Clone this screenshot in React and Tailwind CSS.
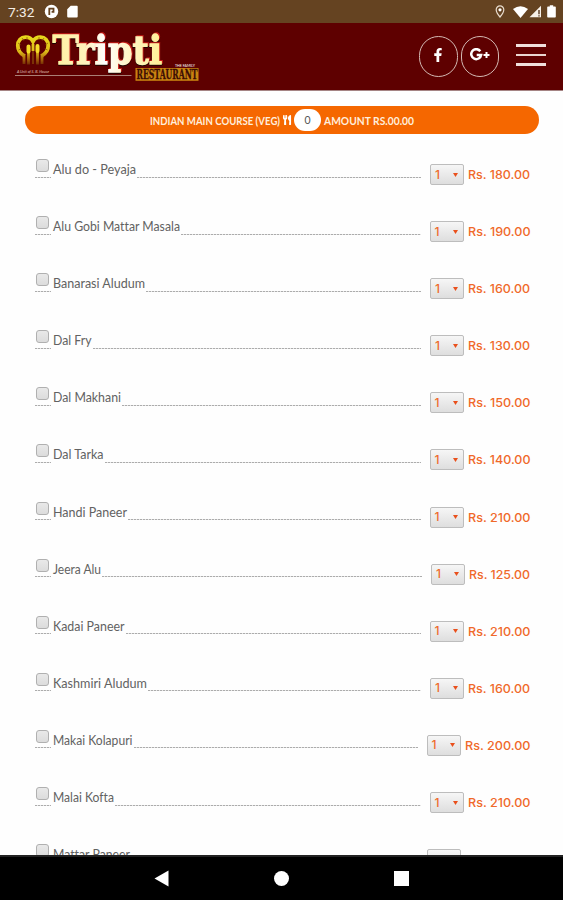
import React from "react";
import { FaFacebookF, FaUtensils } from "react-icons/fa";

const dishes = [
  { name: "Alu do - Peyaja", price: "180.00", nameWidth: 83, priceWidth: 62 },
  { name: "Alu Gobi Mattar Masala", price: "190.00", nameWidth: 127, priceWidth: 62.5 },
  { name: "Banarasi Aludum", price: "160.00", nameWidth: 92, priceWidth: 62 },
  { name: "Dal Fry", price: "130.00", nameWidth: 38.5, priceWidth: 62 },
  { name: "Dal Makhani", price: "150.00", nameWidth: 68, priceWidth: 62.5 },
  { name: "Dal Tarka", price: "140.00", nameWidth: 50.5, priceWidth: 62.5 },
  { name: "Handi Paneer", price: "210.00", nameWidth: 74, priceWidth: 62.5 },
  { name: "Jeera Alu", price: "125.00", nameWidth: 48, priceWidth: 61 },
  { name: "Kadai Paneer", price: "210.00", nameWidth: 71.5, priceWidth: 62.5 },
  { name: "Kashmiri Aludum", price: "160.00", nameWidth: 94, priceWidth: 62 },
  { name: "Makai Kolapuri", price: "200.00", nameWidth: 79.5, priceWidth: 65.5 },
  { name: "Malai Kofta", price: "210.00", nameWidth: 61, priceWidth: 62.5 },
  { name: "Mattar Paneer", price: "200.00", nameWidth: 77, priceWidth: 65.5 },
];

// A line of text stretched or squeezed to an exact width.
function FitText({ text, width, height, baseline, size, weight = 400, fill, font = "font-['Lato',sans-serif]" }) {
  return (
    <svg width={width} height={height} className="block shrink-0 overflow-visible">
      <text
        x="0"
        y={baseline}
        textLength={width}
        lengthAdjust="spacingAndGlyphs"
        fontSize={size}
        fontWeight={weight}
        fill={fill}
        className={`${font} [font-variant-ligatures:none]`}
      >
        {text}
      </text>
    </svg>
  );
}

function Dashes({ className }) {
  return (
    <div
      className={`h-px bg-[repeating-linear-gradient(90deg,#acacac_0_2px,#e6e6e6_2px_3px)] ${className}`}
    />
  );
}

function StatusBar() {
  return (
    <div className="flex h-[23px] shrink-0 items-center bg-[#654321] pl-2 pr-[7px] text-white">
      <FitText text="7:32" width={26.5} height={14} baseline={12} size={12.5} fill="#f4eee6" font="font-['Roboto',sans-serif]" />
      <svg className="ml-[9px]" width="15" height="15" viewBox="0 0 15 15">
        <circle cx="7.5" cy="7.5" r="6.7" fill="#fff" />
        <path d="M5.300 11V4.600h4.200v3.200H7.600" fill="none" stroke="#654321" strokeWidth="1.8" />
      </svg>
      <svg className="ml-2" width="11" height="13" viewBox="0 0 11 13">
        <path d="M3.7.8h6A1 1 0 0 1 10.7 2v9.5a1 1 0 0 1-1 1H1.2a1 1 0 0 1-1-1V4.3z" fill="#fff" />
      </svg>
      <div className="flex-1" />
      <svg width="10" height="13" viewBox="0 0 10 13">
        <path d="M5 .9a3.8 3.8 0 0 0-3.8 3.8C1.2 7.5 5 12 5 12s3.8-4.5 3.8-7.3A3.8 3.8 0 0 0 5 .9z" fill="none" stroke="#e8dccd" strokeWidth="1.2" />
        <circle cx="5" cy="4.8" r="1.6" fill="#fff" />
      </svg>
      <svg className="ml-2" width="15" height="12" viewBox="0 0 15 12">
        <path d="M0 3Q7.5-2.5 15 3L7.5 12z" fill="#fff" />
      </svg>
      <svg className="ml-px" width="13" height="13" viewBox="0 0 13 13">
        <path d="M.5 12.3H12V.8z" fill="#f7f0e8" />
        <path d="M10 5v4.200M10 10.300v1.300" stroke="#4a2a12" strokeWidth="1.300" />
      </svg>
      <svg className="ml-[5px]" width="9" height="13" viewBox="0 0 9 13">
        <path d="M2.8.3h3.4v1.2H8a.8.8 0 0 1 .8.8v9.4a.8.8 0 0 1-.8.8H1a.8.8 0 0 1-.8-.8V2.300a.8.8 0 0 1 .8-.8h1.800z" fill="#fff" />
      </svg>
    </div>
  );
}

function Logo() {
  return (
    <svg width="190" height="52" viewBox="12 31 190 52" className="block shrink-0 overflow-visible">
      <defs>
        <linearGradient id="gold" gradientUnits="userSpaceOnUse" x1="0" y1="35" x2="0" y2="65">
          <stop offset="0" stopColor="#e8da1c" />
          <stop offset="0.55" stopColor="#dfbd18" />
          <stop offset="0.8" stopColor="#a8640c" />
          <stop offset="1" stopColor="#6d2603" />
        </linearGradient>
        <linearGradient id="cream" x1="0" y1="0" x2="1" y2="0">
          <stop offset="0" stopColor="#fff3a0" />
          <stop offset="0.3" stopColor="#fff2bb" />
          <stop offset="0.48" stopColor="#fff" />
          <stop offset="0.65" stopColor="#fff6cf" />
          <stop offset="1" stopColor="#ffef94" />
        </linearGradient>
      </defs>
      <path d="M24.500 56C20 53.500 17.800 49.500 17.800 45.500c0-4.700 3.200-8.300 7.700-8.300 3.300 0 6 1.500 7.500 4.300 1.500-2.800 4.200-4.300 7.500-4.300 4.500 0 7.700 3.600 7.700 8.300 0 4-2.200 8-6.700 10.500" fill="none" stroke="url(#gold)" strokeWidth="3.800" />
      <path d="M18 43l3 2M22 38l2 3M18.500 50l3-1.500M27 37v3M48 43l-3 2M44 38l-2 3M47.500 50l-3-1.500M39 37v3" stroke="#7d3a05" strokeWidth=".6" />
      <path d="M24 54v10M28.500 48v16.500M33 44v7M37.500 48v16.500M42 54v10" stroke="url(#gold)" strokeWidth="2.800" />
      <path d="M28.500 46.500v5M37.500 46v5" stroke="#f4de27" strokeWidth="4" strokeLinecap="round" />
      <path d="M33 51v13" stroke="#7b3205" strokeWidth="2" />
      <text x="17" y="73" textLength="32" lengthAdjust="spacingAndGlyphs" fontSize="4" fontStyle="italic" fill="#e0c7bf" className="font-['Lato',sans-serif]">
        A Unit of S. B. House
      </text>
      <path d="M15 75.500H131.500" stroke="#b28d82" strokeWidth=".9" />
      <text
        x="52.500"
        y="64.300"
        textLength="109.500"
        lengthAdjust="spacingAndGlyphs"
        fontSize="40"
        fontWeight="700"
        fill="url(#cream)"
        stroke="url(#cream)"
        strokeWidth="1.300"
        className="font-['DejaVu_Serif',serif] [filter:drop-shadow(1px_-0.5px_0_#c51b16)_drop-shadow(0.5px_1.5px_0_#1c0500)]"
      >
        Tripti
      </text>
      <text x="175" y="66.500" textLength="20" lengthAdjust="spacingAndGlyphs" fontSize="3.500" fill="#fff" className="font-['Lato',sans-serif]">THE FAMILY</text>
      <rect x="135.500" y="68" width="63" height="12.800" fill="#c98310" />
      <text x="136.500" y="79.300" textLength="61" lengthAdjust="spacingAndGlyphs" fontSize="13.500" fontWeight="700" fill="#3d0d04" stroke="#3d0d04" strokeWidth=".3" className="font-['DejaVu_Serif',serif]">RESTAURANT</text>
    </svg>
  );
}

function Header() {
  return (
    <header className="flex h-[68px] shrink-0 items-start border-b border-[#a58484] bg-[#5e0000] pl-3 pr-[17px]">
      <div className="pt-2">
        <Logo />
      </div>
      <div className="flex-1" />
      <div className="mt-[13px] flex gap-[3px]">
        <div className="flex h-[41px] w-[38.500px] items-center justify-center rounded-full border border-[#d3b9b3] pb-1">
          <FaFacebookF size={14} color="#fff" />
        </div>
        <div className="flex h-[41px] w-[38.500px] items-center justify-center rounded-full border border-[#d3b9b3] pb-1">
          <svg width="20" height="14" viewBox="0 0 20 14">
            <path d="M10.300 3.200A5 5 0 1 0 11.200 6.900H6.700" fill="none" stroke="#fff" strokeWidth="2.500" />
            <path d="M13.500 7h6M16.500 4v6" stroke="#fff" strokeWidth="2" />
          </svg>
        </div>
      </div>
      <div className="ml-[17px] mt-[21px] flex w-[30px] flex-col gap-[7px]">
        <div className="h-[3px] bg-[#f0dfdc]" />
        <div className="h-[2px] bg-[#ead5d0]" />
        <div className="h-[3px] bg-[#f0dfdc]" />
      </div>
    </header>
  );
}

function CategoryBar() {
  return (
    <div className="ml-[25px] mt-[15px] flex h-7 w-[514px] shrink-0 items-center rounded-full bg-[#f56700] pl-[125px]">
      <FitText text="INDIAN MAIN COURSE (VEG)" width={130} height={14} baseline={11.5} size={10.5} weight={700} fill="#ffeedd" />
      <FaUtensils className="ml-[2px]" size={10} color="#fff" />
      <div className="ml-[2px] flex h-[22px] w-[27px] items-center justify-center rounded-full bg-white pt-px font-['Lato',sans-serif] text-[10.500px] text-[#555]">
        0
      </div>
      <div className="ml-[3px]">
        <FitText text="AMOUNT RS.00.00" width={90} height={14} baseline={11.5} size={10.5} weight={700} fill="#ffeedd" />
      </div>
    </div>
  );
}

function DishRow({ dish }) {
  return (
    <div className="flex h-[57.100px] shrink-0 items-start pl-[35px] pr-[33px]">
      <div className="w-4 pt-[10px]">
        <div className="ml-[0.500px] h-[13px] w-[13px] rounded-[3px] border border-[#b0b0b0] bg-linear-to-b from-[#e9e9e9] to-[#dcdcdc]" />
        <Dashes className="mt-[4.500px]" />
      </div>
      <div className="ml-[2px] mt-3">
        <FitText text={dish.name} width={dish.nameWidth} height={16} baseline={12.5} size={12.5} fill="#626262" />
      </div>
      <Dashes className="ml-px mt-[27.500px] flex-1" />
      <div className="ml-[9px] mt-[15px] flex h-[21px] w-[34px] items-center justify-between rounded-[2px] border border-[#bdbdbd] bg-linear-to-b from-[#f6f6f6] to-[#dedede] pl-1 pr-[5px] font-['Inter',sans-serif] text-[12px] font-medium leading-none text-[#ee6b2b]">
        <span>1</span>
        <svg width="5" height="4" viewBox="0 0 5 4">
          <path d="M0 0h5L2.500 4z" fill="#e9501c" />
        </svg>
      </div>
      <div className="ml-1 mt-[17px]">
        <FitText text={"Rs. " + dish.price} width={dish.priceWidth} height={17} baseline={13} size={11.8} weight={500} fill="#f0692a" font="font-['Inter',sans-serif]" />
      </div>
    </div>
  );
}

function NavBar() {
  return (
    <nav className="flex h-[45px] shrink-0 items-center border-t-2 border-[#222] bg-black pl-[154px]">
      <svg width="15" height="17" viewBox="0 0 15 17">
        <path d="M14.500.500v16L.500 8.500z" fill="#fff" />
      </svg>
      <div className="ml-[105px] h-[15px] w-[15px] rounded-full bg-white" />
      <div className="ml-[105px] h-[15px] w-[15px] bg-white" />
    </nav>
  );
}

export default function App() {
  return (
    <div className="flex h-[900px] w-[563px] flex-col overflow-hidden bg-[#fefefe]">
      <StatusBar />
      <Header />
      <CategoryBar />
      <main className="mt-[15px] flex min-h-0 flex-1 flex-col overflow-hidden">
        {dishes.map((dish) => (
          <DishRow key={dish.name} dish={dish} />
        ))}
      </main>
      <NavBar />
    </div>
  );
}
